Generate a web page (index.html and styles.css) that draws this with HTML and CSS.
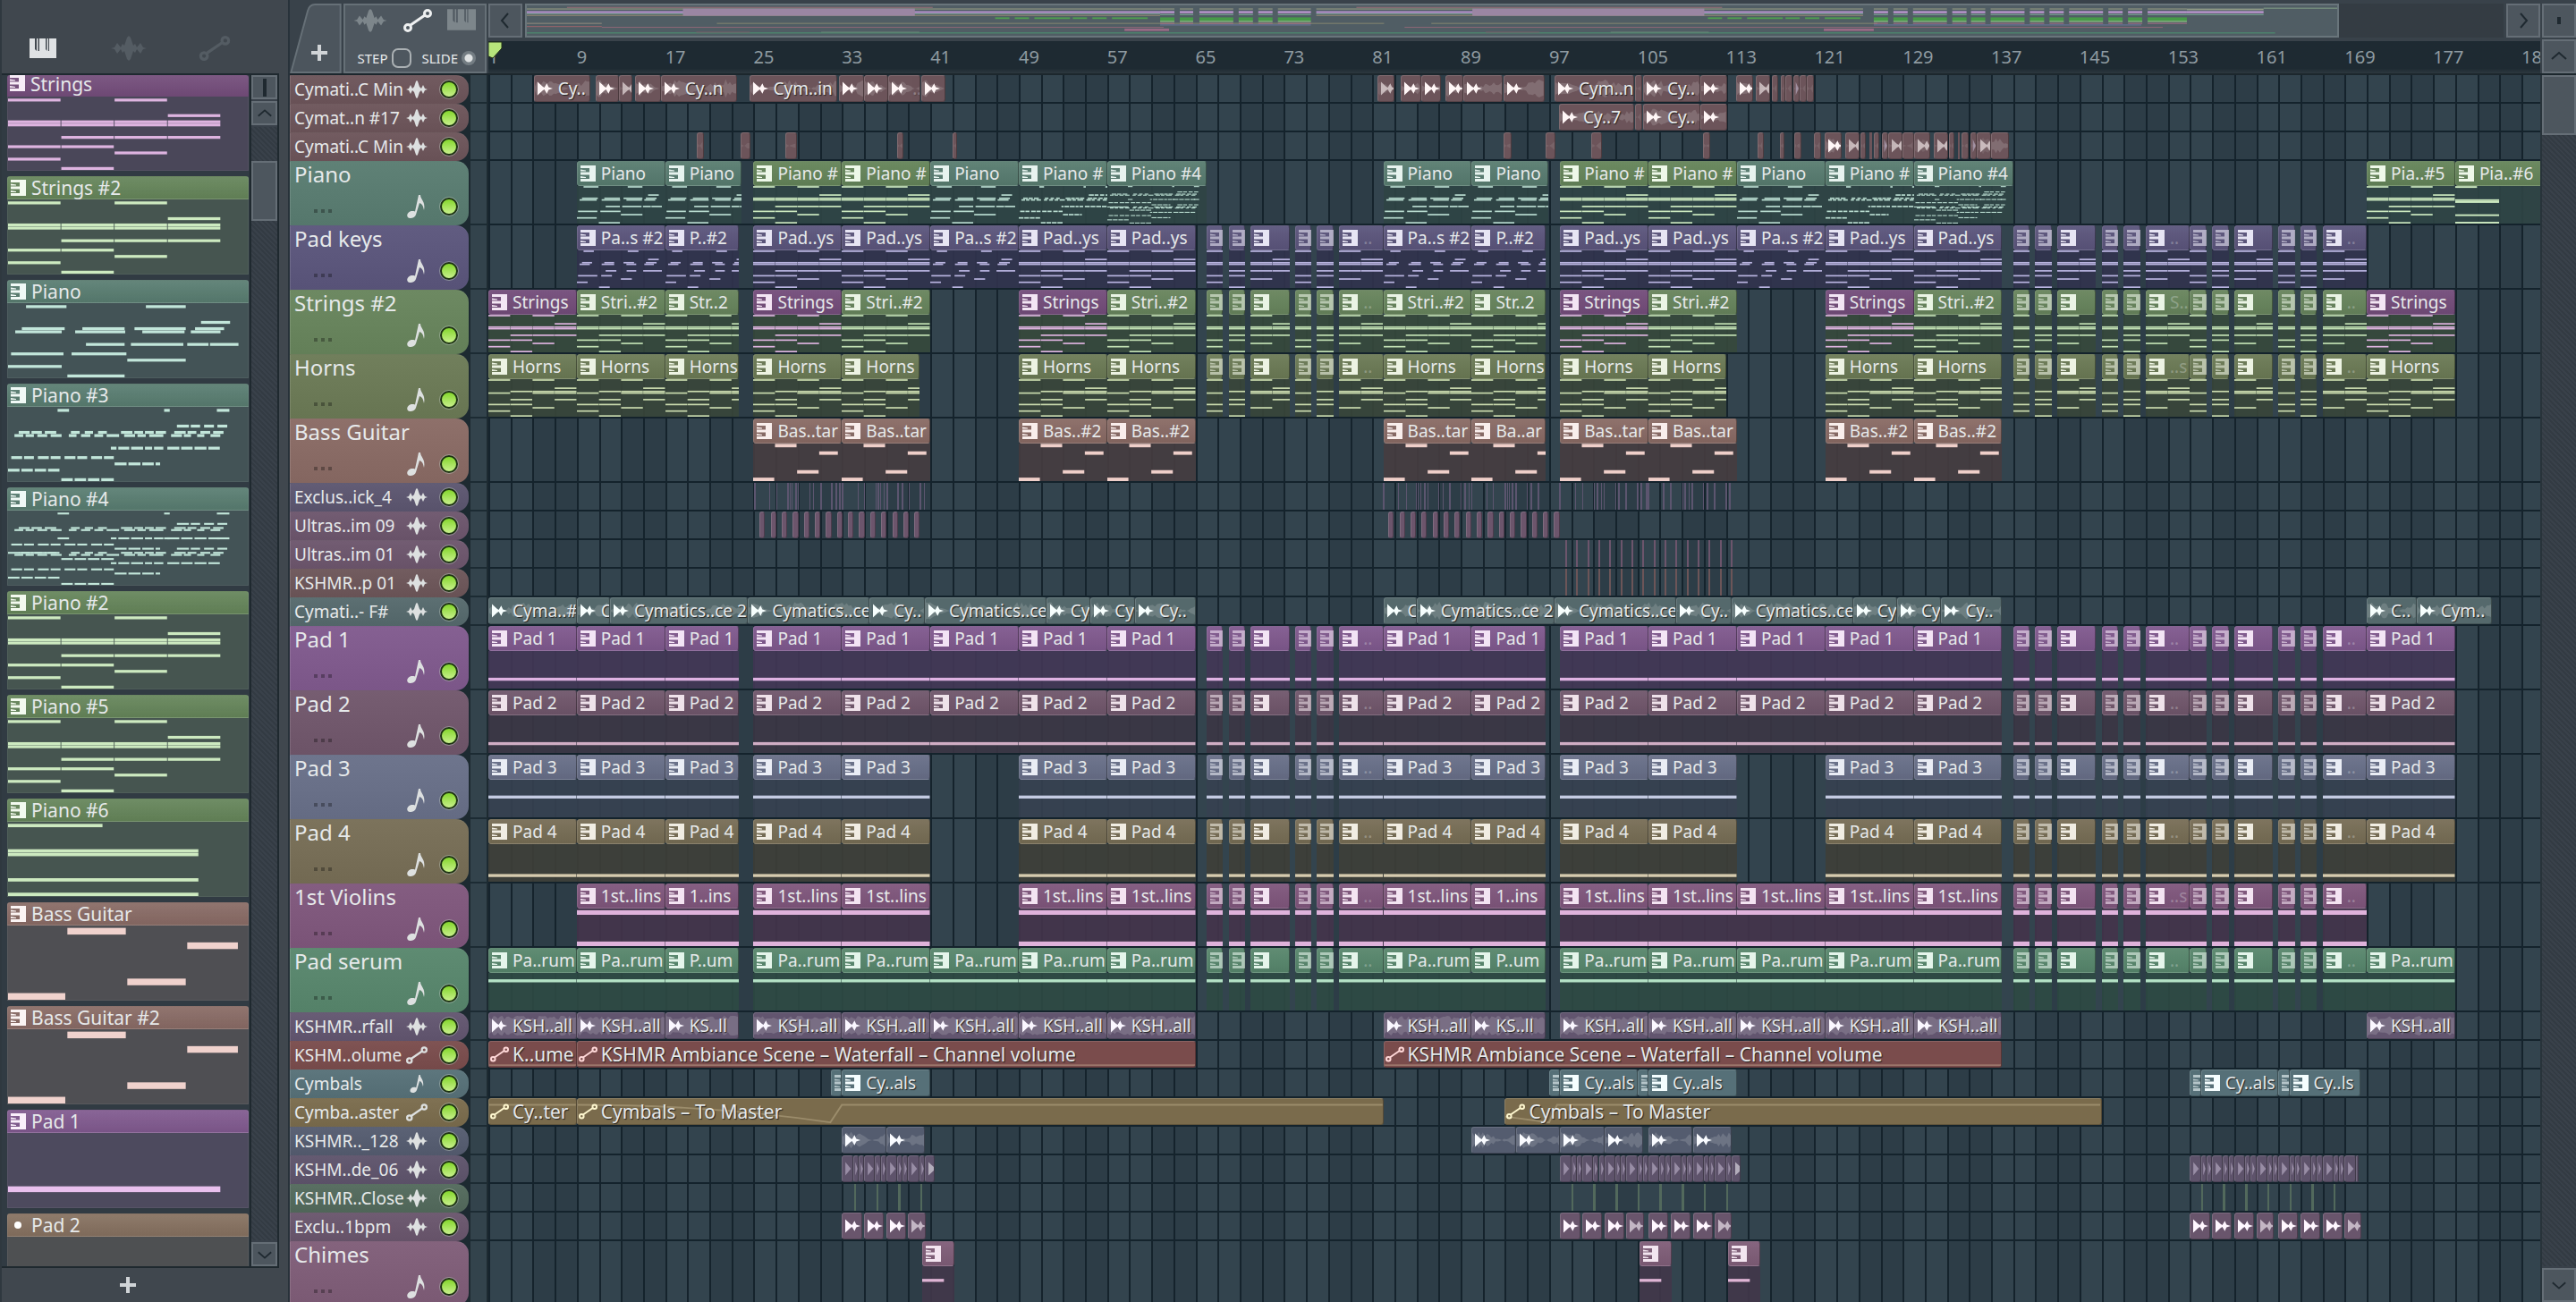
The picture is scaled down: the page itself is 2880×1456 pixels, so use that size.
FILE: index.html
```html
<!DOCTYPE html>
<html lang="en">
<head>
  <meta charset="UTF-8">
  <meta name="viewport" content="width=device-width, initial-scale=1.0">
  <title>Playlist</title>
  <link rel="stylesheet" href="styles.css">
</head>
<body>
  <!-- Icon sprites -->
  <svg class="sprites" aria-hidden="true">
    <symbol id="keys" viewBox="0 0 30 22"><path d="M0 0h6v12l2 2V0h1.500v14H11V0h7v12l1.500 2V0H21v14h1V0h8v22H0z"/></symbol>
    <symbol id="keys-side" viewBox="0 0 17 18"><path d="M0 0h17v18H0v-3h10v-4.500H0v-3h10V3H0zM0 4.500l6 1v1H0zM0 12l6 1v1H0z"/></symbol>
    <symbol id="wave" viewBox="0 0 40 28"><path d="M0 14l4-1 3-5 4 5 2-4 2 2 3-9 2-2 2 2 3 9 2-2 2 4 4-5 3 5 4 1-4 1-3 5-4-5-2 4-2-2-3 9-2 2-2-2-3-9-2 2-2-4-4 5-3-5z"/></symbol>
    <symbol id="wave-small" viewBox="0 0 24 20"><path d="M0 10l3-1 2-4 2 4 2-2 2-6 1-1 1 1 2 6 2 2 2-4 2 4 3 1-3 1-2 4-2-4-2 2-2 6-1 1-1-1-2-6-2-2-2 4-2-4z"/></symbol>
    <symbol id="sample" viewBox="0 0 18 16"><path d="M0 0l6 5.500 2 1.500 3-5 2 4.500 5 1.500-5 1.500-2 4.500-3-5-2 1.500L0 16z"/></symbol>
    <symbol id="link" viewBox="0 0 32 26"><g fill="none" stroke="currentColor" stroke-width="3"><circle cx="5" cy="21" r="3.500"/><circle cx="27" cy="5" r="3.500"/><path d="M8 18L24 7"/></g></symbol>
    <symbol id="note" viewBox="0 0 20 26"><path d="M13 0h2c0 5 6 7 4 17-1-5-2-7-5-8l-4 13c-1 4-7 5-9 3s0-7 5-7c1 0 2 0 3 .5z"/></symbol>
    <symbol id="chevron" viewBox="0 0 20 20"><path d="M13 2L6 10l7 8" fill="none" stroke="currentColor" stroke-width="2"/></symbol>
  </svg>

  <div class="app">
    <aside class="browser">
      <nav class="browser-tabs">
        <button class="active" aria-label="Patterns"><svg><use href="#keys"/></svg></button>
        <button aria-label="Audio"><svg><use href="#wave"/></svg></button>
        <button aria-label="Automation"><svg><use href="#link"/></svg></button>
      </nav>
      <div class="browser-body">
        <ul class="patterns" id="patterns"></ul>
        <div class="scroll">
          <button class="split" aria-label="Split"></button>
          <button aria-label="Up"><svg class="up"><use href="#chevron"/></svg></button>
          <div class="scroll-track"><div class="thumb"></div></div>
          <button aria-label="Down"><svg class="down"><use href="#chevron"/></svg></button>
        </div>
      </div>
      <button class="add-pattern" aria-label="Add pattern"><i class="plus"></i></button>
    </aside>

    <main class="playlist">
      <div class="top">
        <div class="corner">
          <button class="tab" aria-label="Add track">
            <svg class="tab-shape" viewBox="0 0 58 79"><path d="M1 78L20 8q2-7 8-7h29v77z"/></svg>
            <i class="plus"></i>
          </button>
          <div class="modes">
            <div class="mode-icons">
              <svg><use href="#wave"/></svg>
              <svg class="active"><use href="#link"/></svg>
              <svg><use href="#keys"/></svg>
            </div>
            <div class="mode-switches">
              <label>STEP<input type="checkbox" class="step"></label>
              <label>SLIDE<input type="radio" class="slide" checked></label>
            </div>
          </div>
        </div>
        <div class="nav">
          <div class="nav-row">
            <button aria-label="Scroll left"><svg><use href="#chevron"/></svg></button>
            <div class="overview-wrap"><svg class="overview" id="overview" viewBox="0 0 2030 38" preserveAspectRatio="none"></svg></div>
            <button aria-label="Scroll right"><svg class="right"><use href="#chevron"/></svg></button>
          </div>
          <div class="ruler" id="ruler"><svg class="playhead" viewBox="0 0 17 20"><path d="M0 1h15v7L5 19l-5-2z"/></svg></div>
        </div>
        <div class="side-buttons">
          <button aria-label="Zoom"><i class="zoom-mark"></i></button>
          <button aria-label="Up"><svg class="up"><use href="#chevron"/></svg></button>
        </div>
      </div>
      <div class="arrange">
        <div class="tracks" id="tracks"></div>
        <div class="scroll wide">
          <div class="scroll-track"><div class="thumb"></div></div>
          <button aria-label="Down"><svg class="down"><use href="#chevron"/></svg></button>
        </div>
      </div>
    </main>
  </div>
  <script src="script.js"></script>
</body>
</html>
```
FILE: styles.css
```css
* { box-sizing: border-box; }
body { margin: 0; background: #40474e; color: #e6e9ea; font-family: "Noto Sans", "Open Sans", sans-serif; overflow: hidden; }
button { border: 0; padding: 0; background: none; color: inherit; font: inherit; display: flex; align-items: center; justify-content: center; cursor: pointer; }
svg { display: block; fill: currentColor; }
.sprites { position: absolute; width: 0; height: 0; }
.app { display: flex; height: 100vh; }

/* Pattern browser */
.browser { width: 312px; flex: none; display: flex; flex-direction: column; border-left: 2px solid #2f383f; }
.browser-tabs { height: 82px; flex: none; display: flex; align-items: flex-end; padding: 0 0 10px 16px; gap: 36px; color: #545c63; }
.browser-tabs button { width: 60px; height: 36px; }
.browser-tabs svg { width: 40px; height: 28px; }
.browser-tabs .active { color: #dfe2e4; }
.browser-tabs .active svg { width: 30px; height: 22px; }
.browser-body { flex: 1; min-height: 0; display: flex; border: solid #1f292f; border-width: 2px 2px 2px 0; background: #313b43; }
.patterns { flex: 1; min-width: 0; list-style: none; margin: 0; padding: 0 1px 0 6px; overflow: hidden; display: flex; flex-direction: column; gap: 6px; border-right: 2px solid #1f292f; }
.patterns li { height: 110px; flex: none; display: flex; flex-direction: column; }
.patterns li:first-child { height: 107px; }
.patterns li:first-child .pattern-head { height: 24px; border: 0; line-height: 20px; align-items: flex-start; }
.pattern-head { height: 26px; flex: none; display: flex; align-items: center; gap: 6px; padding-left: 3px; border: 1px solid rgba(255,255,255,.08); border-radius: 3px 3px 0 0; background: linear-gradient(rgba(255,255,255,.07), rgba(0,0,0,.05)) var(--c); font-size: 21px; line-height: 24px; }
.pattern-head svg { width: 17px; height: 18px; flex: none; fill: color-mix(in srgb, var(--n) 25%, #fff); }
.pattern-head .dot { width: 8px; height: 8px; margin: 0 5px 0 4px; border-radius: 50%; background: #fff; flex: none; }
.pattern-body { flex: 1; min-height: 0; background: color-mix(in srgb, var(--c) 26%, #3b454d); border: 1px solid rgba(255,255,255,.06); border-top: 0; }
.notes { width: 100%; height: 100%; fill: var(--n); }
.pattern-body .notes { padding-top: 2px; }
.add-pattern { height: 38px; flex: none; padding-right: 28px; }
.plus { display: block; width: 18px; height: 18px; background: linear-gradient(#d0d4d7, #d0d4d7) center / 4px 18px no-repeat, linear-gradient(#d0d4d7, #d0d4d7) center / 18px 4px no-repeat; }

/* Scroll bars */
.scroll { width: 29px; flex: none; display: flex; flex-direction: column; background: #39414a; gap: 2px; }
.scroll button, .side-buttons button, .nav-row button { border: 2px solid #656e76; background: #4d565e; color: #1f2930; }
.scroll button { height: 27px; }
.scroll svg { width: 18px; height: 18px; }
.split::after { content: ""; width: 4px; height: 20px; background: #1f2930; }
.scroll-track { flex: 1; padding-top: 38px; background: repeating-linear-gradient(45deg, #39414a 0 2px, #333b43 2px 4px); }
.thumb { height: 67px; border: 2px solid #656e76; background: #4d565e; }
.scroll.wide { width: 40px; border-left: 2px solid #28333a; }
.wide .scroll-track { padding-top: 0; }
.wide button { height: 38px; }
.up { transform: rotate(90deg); }
.down { transform: rotate(270deg); }
.right { transform: rotate(180deg); }

/* Top strip */
.playlist { flex: 1; min-width: 0; margin-left: 10px; display: flex; flex-direction: column; border-left: 2px solid #28323a; }
.top { height: 84px; flex: none; display: flex; background: #39424a; border-bottom: 2px solid #1c272d; }
.corner { width: 222px; flex: none; display: flex; gap: 2px; padding: 4px 2px 0 0; background: #39424a; }
.tab { width: 58px; height: 78px; position: relative; padding: 32px 0 0 8px; }
.tab .plus { position: relative; }
.tab-shape { position: absolute; inset: 0; width: 58px; height: 78px; fill: #4c555d; stroke: #667077; stroke-width: 2; }
.modes { flex: 1; border: 2px solid #667077; background: #4e575f; padding: 4px 10px 4px 8px; display: flex; flex-direction: column; justify-content: space-between; }
.mode-icons { display: flex; justify-content: space-between; color: #7d868b; }
.mode-icons svg { width: 40px; height: 26px; }
.mode-icons svg:last-child { width: 32px; height: 24px; }
.mode-icons .active { color: #eef0f1; width: 34px; }
.mode-switches { display: flex; justify-content: flex-end; gap: 12px; font-size: 15px; line-height: 22px; }
.mode-switches label { display: flex; align-items: center; gap: 4px; }
.mode-switches input { appearance: none; margin: 0; }
.step { width: 22px; height: 22px; border: 2px solid #aab0b3; border-radius: 7px; }
.slide { width: 16px; height: 16px; border-radius: 50%; background: radial-gradient(circle, #dfe2e3 0 4px, #747d83 5px); }
.nav { flex: 1; min-width: 0; display: flex; flex-direction: column; }
.nav-row { height: 42px; display: flex; gap: 3px; padding-top: 4px; }
.nav-row button { width: 38px; height: 38px; flex: none; }
.nav-row button svg, .side-buttons svg { width: 20px; height: 20px; }
.overview-wrap { flex: 1; min-width: 0; padding-right: 8%; background: #343c43; }
.overview { width: 100%; height: 38px; background: #505d64; border: 2px solid #69757b; }
.ruler { flex: 1; margin-top: 4px; position: relative; overflow: hidden; background: linear-gradient(#1e2a32 85%, #2d383f); color: #8f9ba1; font-size: 20px; line-height: 36px; }
.ruler span { position: absolute; left: var(--x); }
.playhead { position: absolute; z-index: 1; width: 17px; height: 20px; fill: #b7e57c; stroke: #223018; stroke-width: 1; }
.side-buttons { width: 40px; display: flex; flex-direction: column; gap: 2px; padding: 4px 0 0 2px; }
.side-buttons button { width: 38px; height: 38px; }
.zoom-mark { width: 4px; height: 8px; background: #1f2930; }

/* Tracks */
.arrange { flex: 1; min-height: 0; display: flex; }
.tracks { flex: 1; min-width: 0; overflow: hidden; background: #1d2a31; }
.track { height: 32px; display: flex; }
.track.tall { height: 72px; }
.head { width: 200px; flex: none; display: flex; align-items: center; padding: 0 12px 2px 4px; border-radius: 0 14px 14px 0; border-left: 1px solid rgba(255,255,255,.12); border-top: 1px solid rgba(255,255,255,.06); background: linear-gradient(rgba(255,255,255,.04), rgba(0,0,0,.04)) var(--c); }
.name { flex: 1; font-size: 19px; line-height: 28px; white-space: nowrap; }
.type { width: 24px; height: 20px; flex: none; margin-right: 14px; color: #dde0e0; }
.led { appearance: none; width: 20px; height: 20px; margin: 0; flex: none; border-radius: 50%; border: 2px solid #1d3312; outline: 1px solid rgba(190,200,190,.5); background: linear-gradient(#84d62c, #c8f08c); }
.tall .head { flex-wrap: wrap; align-content: space-between; padding-bottom: 8px; }
.tall .name { flex: 0 0 100%; font-size: 24px; line-height: 28px; }
.tall .type { height: 26px; width: 20px; margin-right: 17px; }
.tall .dots { flex: 1; padding: 10px 0 0 22px; }
.dots::before { content: ""; display: block; width: 20px; height: 4px; background: repeating-linear-gradient(90deg, rgba(0,0,0,.3) 0 4px, transparent 4px 8px); }
.tick { width: 18px; margin: 0 2px; flex: none; background: #33434c; border-bottom: 2px solid #1c2b33; }
.lane { flex: 1; position: relative; overflow: hidden; border-bottom: 2px solid #14232c; background: repeating-linear-gradient(90deg, #15232c 0 2px, transparent 2px var(--step)), repeating-linear-gradient(90deg, #33444e 0 calc(var(--step) * 2), #2d3d47 calc(var(--step) * 2) calc(var(--step) * 4)); }

/* Clips */
.clip { position: absolute; top: 0; height: 30px; overflow: hidden; border-radius: 3px; border: 1px solid rgba(255,255,255,.13); border-right-color: rgba(0,0,0,.3); border-bottom-color: rgba(0,0,0,.2); background: var(--c); }
.clip.thin { border: 0; border-radius: 0; }
.label { display: flex; align-items: center; gap: 6px; padding-left: 3px; font-size: 19px; line-height: 26px; white-space: nowrap; text-shadow: 1px 1px 1px #222; }
.clip .label { position: absolute; inset: 0; }
.label svg { width: 17px; height: 18px; flex: none; fill: color-mix(in srgb, var(--n) 35%, #fff); }
.label .icon-sample { height: 16px; }
.label .icon-link { width: 21px; height: 18px; color: var(--n); margin: 0 -2px 0 -2px; }
.label.automation { font-size: 21px; }
.dim svg { opacity: .6; }
.dim .notes { opacity: 1; }
.faint span { opacity: .3; }
.wave { position: absolute; inset: 0; width: 100%; height: 100%; fill: rgba(255,255,255,.15); }
.wedge { fill: #c0b4cc; opacity: .8; }
.curve { position: absolute; inset: 0; width: 100%; height: 100%; fill: none; stroke: rgba(255,240,200,.25); stroke-width: 2; }
.clip.pattern { height: 70px; border: 0; border-radius: 0; background: none; display: flex; flex-direction: column; }
.pattern .label { position: relative; inset: auto; height: 28px; flex: none; border-radius: 3px; border: 1px solid rgba(255,255,255,.1); border-right-color: rgba(0,0,0,.35); background: linear-gradient(rgba(255,255,255,.05), rgba(0,0,0,.06)) var(--c); text-shadow: none; }
.pattern .body { flex: 1; min-height: 0; position: relative; }
.pattern .body::before { content: ""; position: absolute; inset: 0; background: var(--b); opacity: .9; }
.pattern .notes { position: relative; }
```
FILE: script.js
```js
const BARS = 185.7; // bars visible in the window

const el = (cls, html = '', tag = 'div') => {
  const node = document.createElement(tag);
  node.className = cls;
  node.innerHTML = html;
  return node;
};
const icon = (id, cls = '') => `<svg class="${cls}"><use href="#${id}"/></svg>`;

// Note patterns: "row start-end ...". One unit is two bars.
const parse = text => text.trim().split(';').flatMap(line => {
  const [row, ...spans] = line.trim().split(/\s+/);
  return spans.map(s => [+row, ...s.split('-').map(Number), 1]);
});
const chords = parse('0 0-1 2-3; 5 3-4; 7 0-1 1-2 2-3 3-4; 8 0-1 1-2 2-3 3-4; 12 1-2 2-3 3-4; 15 0-1 1-2; 17 2-3; 19 0-1; 22 1-2');
const horns = parse('0 0-1 2-3; 5 3-4; 7 1-2 2-3 3-4; 8 0-1 2-3 3-4; 12 1-2 3-4; 15 0-1 1-2; 17 2-3; 19 0-1; 22 1-2');
const piano = parse('0 .3-.99 2.3-2.98; 5 3.22-3.72; 7 .23-.96 1.24-1.96 2.11-2.98 3.12-3.62; 8 .12-.91 1.12-1.97 2.24-2.96 3.05-3.56; 12 1.3-1.96 2.05-2.94 2.99-3.36 3.37-3.86; 15 .05-.94 1.06-1.99; 17 1.99-2.98; 19 0-.91; 22 .99-1.96');
const keys2 = parse('0 .3-.78 2.3-2.8; 5 3.22-3.72; 7 .23-.7 1.24-1.7 2.11-2.6 3.12-3.62; 8 .12-.6 1.12-1.7 2.24-2.7 3.05-3.5; 12 1.3-1.8 2.25-2.7 3-3.86; 15 .05-.94 1.1-1.6; 17 1.99-2.5; 19 0-.5; 22 1-1.5');
const piano3 = parse('0 .93-1.16 2.93-3.05 3.92-4.17; 5 3.17-3.41 3.43-3.62 3.68-3.88 3.93-4.13; 7 .2-.42 .44-.65 .69-.92 1.18-1.36 1.44-1.61 1.69-1.87 2.12-2.35 2.37-2.55 2.57-2.75 2.77-2.98 3.12-3.35 3.37-3.55 3.61-3.81 3.85-4.06; 8 .12-.3 .33-.5 .55-.75 .8-1.02 1.14-1.3 1.37-1.56 1.62-1.8 1.85-2.1 2.18-2.4 2.43-2.6 2.65-2.93 3.06-3.28 3.3-3.45 3.55-3.7 3.8-4; 12 1.93-2.05 2.07-2.29 2.31-2.55 2.57-2.72 2.74-2.93 2.99-3.23 3.25-3.48 3.5-3.74 3.76-3.99; 15 .06-.28 .3-.5 .56-.78 .8-1 1.06-1.28 1.3-1.5 1.56-1.78 1.8-2; 17 2-2.24 2.26-2.5 2.52-2.75 2.77-2.87; 19 0-.23 .25-.48 .5-.73 .75-.98; 22 1-1.23 1.25-1.48 1.5-1.73 1.75-2');
const piano4 = piano3.concat(piano3.map(([r, a, b, h]) => [r + 12, a, b, h]));
const bass = parse('0 .99-1.98; 2 2.99-3.85; 7 1.99-2.98; 9 0-.97');
const flat = (y, h = 2) => [[y, 0, 4, h]];

const PATTERNS = {
  chords: { notes: chords, rows: 23, length: 4.5 },
  horns: { notes: horns, rows: 23, length: 4.5 },
  piano: { notes: piano, rows: 23, length: 4 },
  keys2: { notes: keys2, rows: 23, length: 4 },
  piano3: { notes: piano3, rows: 23, length: 4.5 },
  piano4: { notes: piano4, rows: 35, length: 4.5 },
  piano6: { notes: parse('0 0-1; 7 0-2; 8 0-2; 15 0-2; 19 0-2'), rows: 20, length: 2.5 },
  bass: { notes: bass, rows: 10, length: 4 },
  pad1: { notes: flat(17), rows: 24, length: 4.5 },
  pad3: { notes: flat(10), rows: 24, length: 4.5 },
  pad4: { notes: flat(19), rows: 24, length: 4.5 },
  violins: { notes: flat(1, 3).concat(flat(21, 3)), rows: 24, length: 4.5 },
  serum: { notes: flat(4), rows: 24, length: 4.5 },
  chimes: { notes: [[8, 0, 1, 2]], rows: 24, length: 4 },
  empty: { notes: [], rows: 1, length: 4 }
};

const drawNotes = (name, start, length) => {
  const { notes, rows } = PATTERNS[name];
  const rects = notes
    .filter(([, a]) => a < start + length)
    .map(([r, a, b, h]) => `<rect x="${a}" y="${r + 0.08}" width="${(b - a - 0.015).toFixed(3)}" height="${h - 0.08}"/>`)
    .join('');
  return `<svg class="notes" viewBox="${start} 0 ${length} ${rows}" preserveAspectRatio="none">${rects}</svg>`;
};

const GREEN = ['#648459', '#cdeac0'];
const TEAL = ['#587c70', '#c2e6da'];
const PURPLE = ['#734c7a', '#deb4e0'];
const BROWN = ['#886a64', '#f0d2cd'];

// Pattern browser
const list = document.getElementById('patterns');
[
  ['Strings', PURPLE, 'chords'], ['Strings #2', GREEN, 'chords'], ['Piano', TEAL, 'piano'],
  ['Piano #3', TEAL, 'piano3'], ['Piano #4', TEAL, 'piano4'], ['Piano #2', GREEN, 'chords'],
  ['Piano #5', GREEN, 'chords'], ['Piano #6', GREEN, 'piano6'], ['Bass Guitar', BROWN, 'bass'],
  ['Bass Guitar #2', BROWN, 'bass'], ['Pad 1', ['#80598e', '#e9c0ee'], 'pad1'], ['Pad 2', ['#85705f', '#fff'], 'empty']
].forEach(([name, [c, n], pattern]) => {
  const mark = pattern === 'empty' ? '<i class="dot"></i>' : icon('keys-side');
  const item = el('', `<div class="pattern-head">${mark}<span>${name}</span></div>
    <div class="pattern-body">${drawNotes(pattern, 0, PATTERNS[pattern].length)}</div>`, 'li');
  item.style.setProperty('--c', c);
  item.style.setProperty('--n', n);
  list.append(item);
});

// Ruler
const ruler = document.getElementById('ruler');
for (let bar = 0; bar < BARS; bar += 8) {
  const mark = el('', bar + 1, 'span');
  mark.style.setProperty('--x', bar / BARS * 100 + '%');
  ruler.append(mark);
}

// Clip lists: [start, end, label, pattern, colors, offset]
const shorts = (p, late = '..') => {
  const groups = [[65, 0, ''], [73, 1, '..'], [138, 0, ''], [146, 1, late], [154, 0, ''], [162, 1, '..']];
  return groups.flatMap(([s, full, text]) => [
    [s, s + 1.5, '', p, null, 0],
    [s + 2, s + 3.5, '', p, null, 1],
    [s + 4, s + (full ? 8 : 7.5), text, p, null, 2]
  ]);
};
const CUT = { 16: 22.7, 89: 95.7 };
const long = (starts, label, p, short = label) =>
  starts.map(s => [s, CUT[s] || s + 8, CUT[s] ? short : label, p]);
const all = [0, 8, 16, 24, 32, 40, 48, 56, 81, 89, 97, 105, 113, 121, 129, 170];
const most = all.filter(s => s !== 40 && s !== 113);
const repeat = (start, n, width, step = 1) => Array.from({ length: n }, (_, i) => [start + i * step, start + i * step + width]);

const stringClips = most.map(s => {
  const first = [0, 24, 48, 97, 121, 170].includes(s);
  return [s, CUT[s] || s + 8, first ? 'Strings' : CUT[s] ? 'Str..2' : 'Stri..#2', 'chords', first ? PURPLE : null];
});
const pianoClips = [
  [8, 16, 'Piano', 'piano'], [16, 22.9, 'Piano', 'piano'], [24, 32, 'Piano #', 'chords', GREEN], [32, 40, 'Piano #', 'chords', GREEN],
  [40, 48, 'Piano', 'piano'], [48, 56, 'Piano #', 'piano3'], [56, 65, 'Piano #4', 'piano4'],
  [81, 89, 'Piano', 'piano'], [89, 95.9, 'Piano', 'piano'], [97, 105, 'Piano #', 'chords', GREEN], [105, 113, 'Piano #', 'chords', GREEN],
  [113, 121, 'Piano', 'piano'], [121, 129, 'Piano #', 'piano3'], [129, 138, 'Piano #4', 'piano4'],
  [170, 178, 'Pia..#5', 'chords', GREEN], [178, 186, 'Pia..#6', 'piano6', GREEN]
];
const keyClips = [
  ...long([8, 16, 40, 81, 89, 113], 'Pa..s #2', 'keys2', 'P..#2'),
  ...long([24, 32, 48, 56, 97, 105, 121, 129], 'Pad..ys', 'chords'), ...shorts('chords')
];
const hornClips = most.map(s => [s, { 16: 22.7, 32: 39, 89: 95.7, 105: 112 }[s] || s + 8, 'Horns', 'horns']);

// x positions of the very short hits
const hits = (origin, list) => list.map(x => [origin + x / 23.07, origin + x / 23.07 + 0.12]);
const clicks = [
  ...hits(-0.48, [566, 597, 612, 635, 640, 644, 652, 657, 681, 689, 704, 727, 736, 744, 749, 782, 795, 819, 824, 829, 836, 843, 865, 874, 888, 912, 920]),
  ...hits(62.6, [424, 455, 471, 492, 496, 501, 510, 516, 539, 548, 562, 585, 594, 602, 608, 640, 653, 678, 682, 686, 693, 700, 724, 732, 747, 792, 824, 839, 864, 870, 879, 884, 908, 915, 930, 954, 962, 973, 977, 1008, 1023, 1049, 1053, 1062, 1068, 1091, 1100, 1115, 1139, 1147])
];
const bpm = start => repeat(start, 8, 1.8, 2).map(([a, b], i) => [a, i % 4 === 3 ? a + 1.55 : b, '', 'icon']);
const steps = (start, end) => {
  const out = [];
  let s = start;
  for (let i = 0; s < end - 1.2; i++) {
    const w = i % 3 === 0 ? 1 : 0.5;
    out.push([s, s + w, '', 'wedge']);
    s += w;
  }
  out.push([s, end, '', 'icon']);
  return out;
};

const TRACKS = [
  { name: 'Cymati..C Min', type: 'wave-small', c: '#6c545a', n: '#ffe6e6', wave: 1, clips: [
    [4.1, 9.2, 'Cy..', 'icon'], [9.7, 11.8, '', 'icon'], [11.8, 13, '', 'icon'], [13.3, 15.6, '', 'icon'], [15.6, 22.5, 'Cy..n', 'icon'],
    [23.6, 31.6, 'Cym..in', 'icon'], [31.7, 34, '', 'icon'], [34, 36.2, '', 'icon'], [36.2, 39.1, '..', 'icon'], [39.2, 41.4, '', 'icon'],
    [80.5, 82, '', 'icon'], [82.6, 84.4, '', 'icon'], [84.4, 86.2, '', 'icon'], [86.6, 88.2, '', 'icon'], [88.2, 91.8, '', 'icon'], [91.9, 95.6, '', 'icon'],
    [96.5, 103.7, 'Cym..n', 'icon'], [103.8, 104.4], [104.5, 109.7, 'Cy..', 'icon'], [109.7, 112.1, '', 'icon'], [112.9, 114.5, '', 'icon'], [114.7, 116, '', 'icon'],
    [116.2, 116.7], [117, 117.4], [117.4, 118], [118.1, 118.7, '', 'wedge'], [118.7, 119.3], [119.3, 120]] },
  { name: 'Cymat..n #17', type: 'wave-small', c: '#6c545a', n: '#ffe6e6', wave: 1, clips: [
    [96.9, 103.7, 'Cy..7', 'icon'], [103.8, 104.4], [104.5, 109.7, 'Cy..', 'icon'], [109.7, 112.1, '', 'icon']] },
  { name: 'Cymati..C Min', type: 'wave-small', c: '#6c545a', n: '#ffe6e6', wave: 1, clips: [
    [18.9, 19.5], [22.8, 23.7], [26.9, 27.9], [37, 37.6], [42, 42.4], [91.9, 92.6], [95.7, 96.6], [99.8, 100.8], [109.9, 110.6], [114.9, 115.4], [116.9, 117.3],
    [118.2, 118.8], [120, 120.6], [120.9, 122.5, '', 'icon'], [122.8, 124.1, '', 'icon'], [124.2, 124.7], [125, 125.2], [125.4, 125.9], [126.1, 126.7, '', 'wedge'],
    [126.7, 128, '', 'icon'], [128, 129], [129, 130.5, '', 'icon'], [130.8, 132.1, '', 'icon'], [132.2, 132.7], [133, 133.2], [133.3, 134], [134.1, 134.7, '', 'wedge'], [134.7, 136, '', 'icon'], [136, 137.6]] },
  { name: 'Piano', tall: 1, c: '#587c70', b: '#2f4545', n: '#b9dcd0', clips: pianoClips },
  { name: 'Pad keys', tall: 1, c: '#5b557c', b: '#31334e', n: '#b9b4e0', clips: keyClips },
  { name: 'Strings #2', tall: 1, c: '#67845c', b: '#36493c', n: '#c2e0b4', clips: [...stringClips, ...shorts('chords', 'S..')] },
  { name: 'Horns', tall: 1, c: '#6b7a55', b: '#38463a', n: '#cbdcaf', clips: [...hornClips, ...shorts('horns', '..s')] },
  { name: 'Bass Guitar', tall: 1, c: '#896a64', b: '#463d40', n: '#efcfc9', clips: [
    ...long([24, 32, 81, 89, 97, 105], 'Bas..tar', 'bass', 'Ba..ar'), ...long([48, 56, 121, 129], 'Bas..#2', 'bass')] },
  { name: 'Exclus..ick_4', type: 'wave-small', c: '#5c556f', clips: clicks },
  { name: 'Ultras..im 09', type: 'wave-small', c: '#6c556c', clips: [...repeat(24.55, 15, 0.5), ...repeat(81.45, 16, 0.5)] },
  { name: 'Ultras..im 01', type: 'wave-small', c: '#6c556c', clips: repeat(97.45, 16, 0.16) },
  { name: 'KSHMR..p 01', type: 'wave-small', c: '#6c5558', clips: repeat(97.45, 16, 0.16) },
  { name: 'Cymati..- F#', type: 'wave-small', c: '#55696c', n: '#e6fbf8', wave: 1, clips: [
    [0, 8, 'Cyma..#', 'icon'], [8, 11, 'C', 'icon'], [11, 23.5, 'Cymatics..ce 2', 'icon'], [23.5, 34.5, 'Cymatics..ce', 'icon'], [34.5, 39.5, 'Cy..', 'icon'],
    [39.5, 50.5, 'Cymatics..ce', 'icon'], [50.5, 54.5, 'Cy', 'icon'], [54.5, 58.5, 'Cy', 'icon'], [58.5, 64, 'Cy..', 'icon'],
    [81, 84, 'C', 'icon'], [84, 96.5, 'Cymatics..ce 2', 'icon'], [96.5, 107.5, 'Cymatics..ce', 'icon'], [107.5, 112.5, 'Cy..', 'icon'],
    [112.5, 123.5, 'Cymatics..ce', 'icon'], [123.5, 127.5, 'Cy', 'icon'], [127.5, 131.5, 'Cy', 'icon'], [131.5, 137, 'Cy..', 'icon'],
    [170, 174.5, 'C..', 'icon'], [174.5, 181.3, 'Cym..', 'icon']] },
  { name: 'Pad 1', tall: 1, c: '#80598e', b: '#423757', n: '#deb2e2', clips: [...long(all, 'Pad 1', 'pad1'), ...shorts('pad1')] },
  { name: 'Pad 2', tall: 1, c: '#70566b', b: '#3b3645', n: '#d0adc4', clips: [...long(all, 'Pad 2', 'pad1'), ...shorts('pad1')] },
  { name: 'Pad 3', tall: 1, c: '#686f88', b: '#364151', n: '#c4cbe2', clips: [...long(most, 'Pad 3', 'pad3'), ...shorts('pad3')] },
  { name: 'Pad 4', tall: 1, c: '#776d55', b: '#3e3f39', n: '#d6cbae', clips: [...long(most, 'Pad 4', 'pad4'), ...shorts('pad4')] },
  { name: '1st Violins', tall: 1, c: '#7f567c', b: '#44344b', n: '#dfb2db', clips: [
    ...long(all.filter(s => ![0, 40, 170].includes(s)), '1st..lins', 'violins', '1..ins'), ...shorts('violins', '..s')] },
  { name: 'Pad serum', tall: 1, c: '#57866c', b: '#2d4a44', n: '#b4e2c6', clips: [...long(all, 'Pa..rum', 'serum', 'P..um'), ...shorts('serum')] },
  { name: 'KSHMR..rfall', type: 'wave-small', c: '#62556f', n: '#f2e8ff', wave: 2, clips: long(all, 'KSH..all', 'icon', 'KS..ll') },
  { name: 'KSHM..olume', type: 'link', c: '#7a4c4c', n: '#ffd8d8', clips: [
    [0, 8, 'K..ume', 'curve'], [8, 64, 'KSHMR Ambiance Scene – Waterfall – Channel volume', 'curve'],
    [81, 137, 'KSHMR Ambiance Scene – Waterfall – Channel volume', 'curve']] },
  { name: 'Cymbals', type: 'note', c: '#567078', n: '#e2fbff', clips: [
    [31, 32, '', 'keys'], [32, 40, 'Cy..als', 'keys'], [96, 97, '', 'keys'], [97, 104, 'Cy..als', 'keys'], [104, 105, '', 'keys'], [105, 113, 'Cy..als', 'keys'],
    [154, 155, '', 'keys'], [155, 162, 'Cy..als', 'keys'], [162, 163, '', 'keys'], [163, 169.4, 'Cy..ls', 'keys']] },
  { name: 'Cymba..aster', type: 'link', c: '#7a6b4c', n: '#fff8d0', clips: [
    [0, 8, 'Cy..ter', 'curve', null, 'M0 7H99'], [8, 81, 'Cymbals – To Master', 'curve', null, 'M0 7C80 7 180 12 283 28L296 7H902'],
    [92, 146, 'Cymbals – To Master', 'curve', null, 'M0 21L49 28L58 7H667']] },
  { name: 'KSHMR.._128', type: 'wave-small', c: '#545c6f', n: '#eef4ff', wave: 1, clips: [
    [32, 36], [36, 39.5], [89, 93], [93, 97], [97, 101], [101, 104.5], [105, 109], [109, 112.5]].map(([a, b]) => [a, b, '', 'icon']) },
  { name: 'KSHM..de_06', type: 'wave-small', c: '#5e536b', n: '#c9bfd6', clips: [...steps(32, 40.4), ...steps(97, 113.3), ...steps(154, 169.3)] },
  { name: 'KSHMR..Close', type: 'wave-small', c: '#52695c', clips: [...repeat(33.1, 4, 0.2, 2), ...repeat(98, 8, 0.2, 2), ...repeat(155, 7, 0.2, 2)] },
  { name: 'Exclu..1bpm', type: 'wave-small', c: '#69556c', n: '#ffe8ff', clips: [...bpm(32).slice(0, 4), ...bpm(97), ...bpm(154)] },
  { name: 'Chimes', tall: 1, c: '#7f5d78', b: '#41374a', n: '#deb4d4', clips: [
    [39.3, 42.2, '', 'chimes'], [104.2, 107.1, '', 'chimes'], [112.2, 115.1, '', 'chimes']] }
];

// Repeatable noise for the waveforms
let seed = 7;
const random = () => (seed = (seed * 16807) % 2147483647) / 2147483647;
const drawWave = (width, low) => {
  const n = Math.max(6, Math.round(width * 5));
  let upper = '';
  let lower = '';
  for (let i = 0; i <= n; i++) {
    const x = i / n * 100;
    const h = low ? 7 + random() * 5 : (0.3 + random() * 0.7) * 11 * Math.abs(Math.sin(i / 7 + n));
    upper += `${i ? 'L' : 'M'}${x.toFixed(1)} ${(15 - h).toFixed(1)}`;
    lower = `L${x.toFixed(1)} ${(15 + h).toFixed(1)}` + lower;
  }
  return `<svg class="wave" viewBox="0 0 100 30" preserveAspectRatio="none"><path d="${upper}${lower}z"/></svg>`;
};

const drawClip = (track, [start, end, label = '', kind, colors, extra]) => {
  const width = end - start;
  const cls = ['clip'];
  if (track.tall) cls.push('pattern');
  if (width < 0.25) cls.push('thin');
  if (width < 1.56) cls.push('dim');
  if (['..', '..s', 'S..'].includes(label)) cls.push('faint');
  const clip = el(cls.join(' '));
  clip.style.left = start / BARS * 100 + '%';
  clip.style.width = width / BARS * 100 + '%';
  if (colors) {
    clip.style.setProperty('--c', colors[0]);
    clip.style.setProperty('--n', colors[1]);
  }
  const text = label ? `<span>${label}</span>` : '';
  if (track.tall) {
    clip.innerHTML = `<div class="label">${icon('keys-side')}${text}</div>
      <div class="body">${drawNotes(kind, extra || 0, width / 2)}</div>`;
    return clip;
  }
  let html = track.wave && width > 0.3 ? drawWave(width, track.wave === 2) : '';
  if (kind === 'curve') html += `<svg class="curve" viewBox="0 0 ${Math.round(width * 12.36)} 30" preserveAspectRatio="none"><path d="${extra || 'M0 28H2000'}"/></svg>`;
  if (kind === 'wedge') html += '<svg class="wave wedge" viewBox="0 0 10 30" preserveAspectRatio="none"><path d="M3 7L9 15L3 23z"/></svg>';
  const art = { icon: icon('sample', 'icon-sample'), curve: icon('link', 'icon-link'), keys: icon('keys-side') }[kind];
  if (art) html += `<div class="label${kind === 'curve' ? ' automation' : ''}">${art}${text}</div>`;
  clip.innerHTML = html;
  return clip;
};

const tracks = document.getElementById('tracks');
tracks.style.setProperty('--step', `calc(100% / ${BARS / 2})`);
TRACKS.forEach((track, i) => {
  const row = el(track.tall ? 'track tall' : 'track');
  row.style.setProperty('--c', track.c);
  row.style.setProperty('--n', track.n || '#fff');
  if (track.b) row.style.setProperty('--b', track.b);
  row.append(
    el('head', `<label class="name" for="led${i}">${track.name}</label>
      ${track.tall ? '<span class="dots"></span>' : ''}${icon(track.type || 'note', 'type')}
      <input class="led" type="checkbox" id="led${i}" checked>`),
    el('tick')
  );
  const lane = el('lane');
  track.clips.forEach(clip => lane.append(drawClip(track, clip)));
  row.append(lane);
  tracks.append(row);
});

// Overview strip: [x, width, y, height, color]
const strips = [[0, 1960, 34, 1, '#4b9a72'], [0, 84, 22, 1, '#9a9080'], [0, 84, 26, 1, '#a8666c'],
  [84, 630, 27, 1, '#95687a'], [984, 850, 27, 1, '#95687a'], [213, 748, 22, 1, '#8a8a70'], [1014, 500, 22, 1, '#8a8a70'],
  [710, 169, 24, 1, '#6f7ba6'], [1510, 300, 24, 1, '#6f7ba6'], [670, 50, 29, 3, '#9a6a86'], [1454, 56, 29, 3, '#9a6a86'], [1947, 90, 3, 1, '#8ba88a']];
[[0, 710], [885, 613]].forEach(([x, w]) => {
  strips.push([x, w, 4, 1, '#a3a88a'], [x, w, 7, 3, '#a58abc'], [x, w, 10, 1, '#6fa08a'], [x, w, 12, 1, '#a08f78'],
    [x + 45, 410, 2, 1, '#a0707a'], [x + 175, 260, 4, 9, '#9b86a3'], [x + 190, 60, 33, 1, '#7c5a6a'], [x + 330, 110, 33, 1, '#6c8a78']);
});
[525, 547, 569, 612, 634, 656, 1324, 1346, 1368, 1411, 1433, 1455].forEach((x, i) => {
  strips.push([x, i % 3 === 2 ? 40 : 16, 15, 2, '#4fa04f']);
});
const blocks = [[710, 16], [732, 15], [754, 38], [798, 16], [820, 16], [842, 37], [1510, 16], [1532, 16], [1554, 38], [1598, 16],
  [1619, 16], [1641, 38], [1685, 16], [1707, 16], [1729, 38], [1773, 16], [1795, 16], [1817, 44]];
blocks.forEach(([x, w]) => {
  strips.push([x, w, 4, 1, '#a3a88a'], [x, w, 7, 3, '#b08fc4'], [x, w, 11, 1, '#7fb09a'], [x, w, 15, 4, '#479a48'], [x, w, 19, 2, '#7aa878'], [x, w, 22, 1, '#b06f8a']);
});
strips.push([1861, 86, 4, 2, '#8f9a86'], [1861, 86, 7, 3, '#b08fc4'], [1861, 86, 11, 1, '#7fb09a']);
document.getElementById('overview').innerHTML = strips
  .map(([x, w, y, h, c]) => `<rect x="${x}" y="${y}" width="${w}" height="${h}" fill="${c}"/>`).join('');
```
